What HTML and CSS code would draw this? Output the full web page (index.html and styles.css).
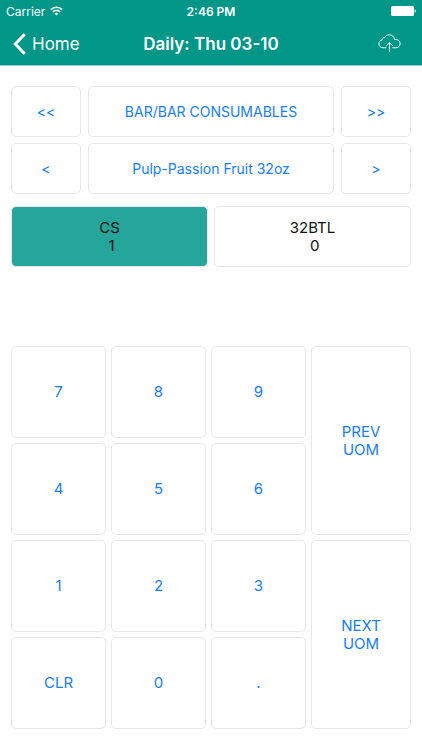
FILE: index.html
```html
<!DOCTYPE html>
<html lang="en">
<head>
    <meta charset="utf-8">
    <meta name="viewport" content="width=device-width, initial-scale=1">
    <title>Daily: Thu 03-10</title>
    <link rel="stylesheet" href="styles.css">
</head>
<body>
    <header class="header">
        <div class="status">
            <div class="carrier">
                <span>Carrier</span>
                <svg width="13" height="10" viewBox="0 0 13 10" fill="none" stroke="#fff" stroke-width="1.6">
                    <path d="M0.8 3.6a8.2 8.2 0 0 1 11.4 0"/>
                    <path d="M2.8 5.9a5.3 5.3 0 0 1 7.4 0"/>
                    <path d="M6.5 9.6L4.5 7.6a2.9 2.9 0 0 1 4 0z" fill="#fff" stroke="none"/>
                </svg>
            </div>
            <span class="time">2:46 PM</span>
            <svg class="battery" width="25" height="10" viewBox="0 0 25 10" fill="#fff">
                <rect x="0" y="0" width="23" height="10" rx="1.5"/>
                <path d="M23.7 3.2c1.5.5 1.5 3.1 0 3.6z"/>
            </svg>
        </div>
        <nav class="navbar">
            <a class="back" href="#">
                <svg width="13" height="22" viewBox="0 0 13 22" fill="none" stroke="#fff" stroke-width="3">
                    <path d="M11.7 1.2L2.2 11l9.5 9.8"/>
                </svg>
                <span>Home</span>
            </a>
            <h1>Daily: Thu 03-10</h1>
            <button class="upload" type="button" aria-label="Upload">
                <svg width="23" height="19" viewBox="0 0 24 20" fill="none" stroke="#fff" stroke-width="1">
                    <path d="M9 14.5H5.2C2.8 14.500.8 12.700.8 10.400.8 8.300 2.200 6.700 4.200 6.300 4.100 4.600 5.400 3.600 6.900 3.900 7.800 2 9.500.8 11.700.8c3 0 5.300 2.100 5.600 5 3.200-.5 5.900 1.500 5.900 4.400 0 2.500-2 4.300-4.500 4.300H15"/>
                    <path d="M12 19V9.300M8.800 12.300L12 9.100l3.200 3.200"/>
                </svg>
            </button>
        </nav>
    </header>

    <main class="content">
        <div class="picker">
            <button type="button">&lt;&lt;</button>
            <button type="button">BAR/BAR CONSUMABLES</button>
            <button type="button">&gt;&gt;</button>
            <button type="button">&lt;</button>
            <button type="button">Pulp-Passion Fruit 32oz</button>
            <button type="button">&gt;</button>
        </div>

        <div class="units">
            <button class="unit active" type="button">CS<br>&nbsp;1</button>
            <button class="unit" type="button">32BTL<br>&nbsp;0</button>
        </div>

        <div class="keypad">
            <button type="button">7</button>
            <button type="button">8</button>
            <button type="button">9</button>
            <button class="tall" type="button">PREV<br>UOM</button>
            <button type="button">4</button>
            <button type="button">5</button>
            <button type="button">6</button>
            <button type="button">1</button>
            <button type="button">2</button>
            <button type="button">3</button>
            <button class="tall" type="button">NEXT<br>UOM</button>
            <button type="button">CLR</button>
            <button type="button">0</button>
            <button type="button">.</button>
        </div>
    </main>
</body>
</html>
```
FILE: styles.css
```css
*{
    margin: 0;
    box-sizing: border-box;
}
body{
    min-height: 100vh;
    display: flex;
    flex-direction: column;
    background-color: #fff;
    font-family: Inter, "Liberation Sans", sans-serif;
    font-size: 15px;
}
button{
    padding: 0;
    background-color: #fff;
    border: 1px solid #e8e8e8;
    border-radius: 5px;
    color: #157efb;
    font-family: inherit;
    font-size: 15px;
    line-height: 18px;
}

.header{
    background-color: #009788;
    border-bottom: 1px solid #8fcfc8;
    color: #fff;
}
.status{
    height: 22px;
    padding: 0 6px;
    display: grid;
    grid-template-columns: 1fr auto 1fr;
    align-items: center;
    font-size: 12px;
}
.carrier{
    display: flex;
    align-items: center;
    gap: 5px;
}
.time{
    font-weight: 600;
}
.battery{
    justify-self: end;
}
.navbar{
    height: 43px;
    padding: 0 13px;
    display: grid;
    grid-template-columns: 1fr auto 1fr;
    align-items: center;
}
.back{
    display: flex;
    align-items: center;
    gap: 6px;
    color: #fff;
    font-size: 17px;
    text-decoration: none;
}
h1{
    font-size: 17px;
    font-weight: 600;
}
.upload{
    padding: 0 8px;
    justify-self: end;
    background: none;
    border: none;
}
.upload svg{
    display: block;
}

.content{
    flex: 1;
    padding: 20px 11px 21px;
    display: flex;
    flex-direction: column;
}
.picker{
    display: grid;
    grid-template-columns: 70px 1fr 70px;
    grid-auto-rows: 51px;
    gap: 6px 7px;
}
.picker button{
    font-size: 14px;
}
.units{
    margin-top: 12px;
    display: grid;
    grid-template-columns: 1fr 1fr;
    gap: 6px;
}
.unit{
    height: 61px;
    color: #111;
}
.active{
    background-color: #26a69a;
}
.keypad{
    flex: 1;
    margin-top: 79px;
    display: grid;
    grid-template-columns: 19fr 19fr 19fr 20fr;
    grid-template-rows: repeat(4, 1fr);
    gap: 5px;
}
.tall{
    grid-column: 4;
    grid-row: span 2;
}
```
